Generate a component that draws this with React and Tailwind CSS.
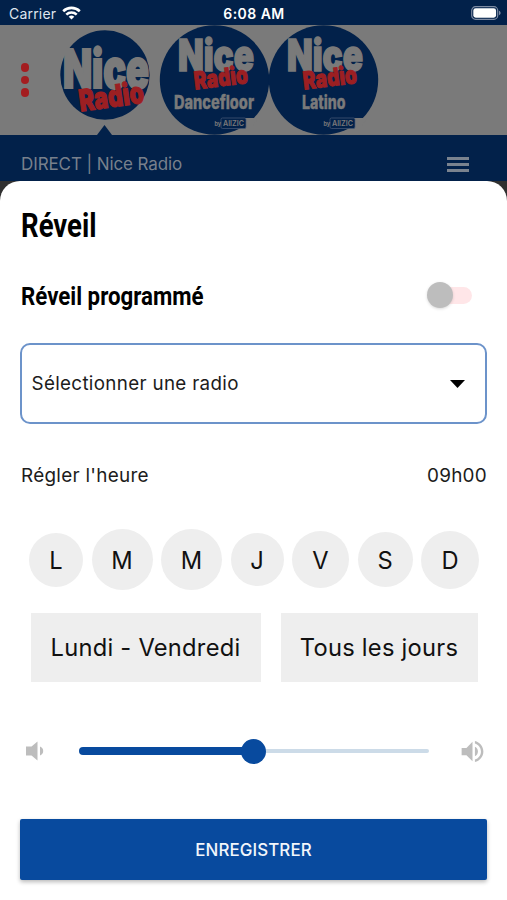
import React from "react"
import { MdVolumeUp } from "react-icons/md";

const days = [
  { label: "L", size: "size-[54px]" },
  { label: "M", size: "size-[61px]" },
  { label: "M", size: "size-[61px]" },
  { label: "J", size: "size-[53px]" },
  { label: "V", size: "size-[57px]" },
  { label: "S", size: "size-[55px]" },
  { label: "D", size: "size-[58px]" },
];

const StatusBar = () => (
  <div className="grid h-[25px] grid-cols-3 items-center bg-[#02214a] pt-[3px] pr-[6px] pl-[9px] text-white">
    <div className="flex items-center gap-[6px]">
      <span className="text-[14px] leading-none tracking-[0.2px] text-[#dfe5ee]">Carrier</span>
      <svg className="-mt-[2px]" width="19" height="14" viewBox="0 0 19 14" fill="none" stroke="#fff" strokeWidth="2.6">
        <path d="M1.2 5.2a12 12 0 0 1 16.6 0" />
        <path d="M4.3 8.6a7.6 7.6 0 0 1 10.4 0" />
        <path d="M9.5 13.6 6.7 10.8a4 4 0 0 1 5.6 0z" fill="#fff" stroke="none" />
      </svg>
    </div>
    <span className="-ml-[2px] text-center text-[14px] leading-none font-semibold tracking-[0.45px] whitespace-nowrap">6:08 AM</span>
    <svg className="-mt-[2px] justify-self-end" width="30" height="14" viewBox="0 0 30 14">
      <rect x="0.7" y="0.7" width="26" height="12.6" rx="3.8" fill="none" stroke="#7d8ba3" strokeWidth="1.2" />
      <rect x="2.3" y="2.3" width="22.8" height="9.4" rx="2.4" fill="#fff" />
      <path d="M28 4.8v4.4c1-.4 1.6-1.2 1.6-2.2S29 5.2 28 4.8z" fill="#7d8ba3" />
    </svg>
  </div>
)

const NiceLogo = () => (
  <svg className="overflow-visible" width="110" height="110" viewBox="0 0 110 110" fontFamily="Inter, sans-serif" fontWeight="900">
    <circle cx="55" cy="50" r="44.7" fill="#02214a" />
    <text x="13" y="63" fontSize="54" fill="#7a7a7a" stroke="#7a7a7a" strokeWidth="2.2" textLength="86" lengthAdjust="spacingAndGlyphs">Nice</text>
    <text transform="translate(30.5 86.5) rotate(-8)" fontSize="30" fill="#9c1f22" stroke="#9c1f22" strokeWidth="1.2" textLength="65" lengthAdjust="spacingAndGlyphs">Radio</text>
  </svg>
)

const ChannelLogo = ({ name, x, width }) => (
  <svg className="overflow-visible" width="109" height="110" viewBox="0 0 109 110" fontFamily="Inter, sans-serif" fontWeight="900">
    <circle cx="54.5" cy="55" r="54.7" fill="#02214a" />
    <text x="18" y="45.5" fontSize="44" fill="#7a7a7a" stroke="#7a7a7a" strokeWidth="1.6" textLength="76" lengthAdjust="spacingAndGlyphs">Nice</text>
    <text transform="translate(35 64.5) rotate(-7)" fontSize="24.5" fill="#9c1f22" stroke="#9c1f22" strokeWidth="1" textLength="54" lengthAdjust="spacingAndGlyphs">Radio</text>
    <text x={x} y="84" fontSize="19" fontWeight="800" fill="#7a7a7a" stroke="#7a7a7a" strokeWidth="0.4" textLength={width} lengthAdjust="spacingAndGlyphs">{name}</text>
    <path d="M84 93h14l-5 8h-9z" fill="#7a7a7a" />
    <rect x="61" y="93" width="25" height="10.5" rx="1.5" fill="#02214a" stroke="#4a5c78" strokeWidth="0.7" />
    <text x="54.5" y="101" fontSize="5.5" fontWeight="700" fill="#7a7a7a">by</text>
    <text x="63" y="101" fontSize="7.5" fontWeight="600" fill="#7a7a7a" textLength="21" lengthAdjust="spacingAndGlyphs">AllZIC</text>
  </svg>
)

const Header = () => (
  <div>
    <div className="relative flex h-[110px] items-start bg-[#7a7a7a]">
      <div className="flex w-[50px] flex-col items-center gap-1 self-center">
        <span className="size-[8.4px] rounded-full bg-[#a41d20]" />
        <span className="size-[8.4px] rounded-full bg-[#a41d20]" />
        <span className="size-[8.4px] rounded-full bg-[#a41d20]" />
      </div>
      <NiceLogo />
      <ChannelLogo name="Dancefloor" x="14" width="80" />
      <ChannelLogo name="Latino" x="33" width="43.5" />
      <svg className="absolute bottom-0 left-[97px]" width="15" height="10" viewBox="0 0 15 10">
        <path d="M7.5 0 15 10H0z" fill="#02214a" />
      </svg>
    </div>
    <div className="flex h-[46px] items-center justify-between bg-[#02214a] pt-3 pr-[38px] pl-[21px]">
      <span className="text-[17px] leading-none tracking-[-0.1px] text-[#78808c]">DIRECT | Nice Radio</span>
      <div className="flex w-[22px] flex-col gap-[3px]">
        <span className="h-[3px] bg-[#7a838f]" />
        <span className="h-[3px] bg-[#7a838f]" />
        <span className="h-[3px] bg-[#7a838f]" />
      </div>
    </div>
  </div>
)

const App = () => {
  return (
    <div className="flex h-[900px] w-[507px] flex-col overflow-hidden bg-[#303030] font-['Inter',sans-serif] text-[#1c1c1c]">
      <StatusBar />
      <Header />

      <div className="flex flex-1 flex-col rounded-t-[20px] bg-white px-5">
        <h1 className="mt-[24px] ml-px h-[40px] w-fit origin-left scale-x-[0.81] font-['Roboto',sans-serif] text-[34px] leading-[40px] font-bold text-black">
          Réveil
        </h1>

        <div className="mt-[35px] flex h-[32px] items-center justify-between">
          <h2 className="ml-px w-fit origin-left scale-x-[0.84] font-['Roboto',sans-serif] text-[26.5px] leading-8 font-bold whitespace-nowrap text-black">
            Réveil programmé
          </h2>
          <div className="mr-[15px] -mt-[2px] flex h-[17px] w-[45px] items-center">
            <span className="z-10 size-[26px] shrink-0 rounded-full bg-[#bdbdbd] shadow-[0_1px_3px_rgba(0,0,0,0.15)]" />
            <span className="-ml-[10px] h-[17px] w-[29px] shrink-0 rounded-r-full bg-[#ffe6e8]" />
          </div>
        </div>

        <div className="mt-[31px] flex h-[81px] items-center justify-between rounded-[10px] border-2 border-[#6c93ca] pr-[20px] pl-[9.5px]">
          <span className="mt-[2px] text-[18.8px] tracking-[0.33px]">Sélectionner une radio</span>
          <svg width="15" height="8" viewBox="0 0 15 8">
            <path d="M0 0h15L7.5 8z" fill="#000" />
          </svg>
        </div>

        <div className="mt-[38px] flex h-7 items-center justify-between pl-px text-[18.9px] tracking-[0.28px]">
          <span>Régler l'heure</span>
          <span>09h00</span>
        </div>

        <div className="mt-[39px] flex h-[61px] items-center justify-between pr-[8px] pl-[9px]">
          {days.map((day, i) => (
            <button key={i} className={`flex items-center justify-center rounded-full bg-[#eeeeee] pt-[2px] text-[23.7px] text-[#111] ${day.size}`}>
              {day.label}
            </button>
          ))}
        </div>

        <div className="mt-[23px] flex gap-5 pl-[10.5px] text-[23.7px] tracking-[0.25px] text-[#111]">
          <button className="h-[69px] w-[230px] bg-[#eeeeee] whitespace-nowrap">Lundi - Vendredi</button>
          <button className="h-[69px] w-[197px] bg-[#eeeeee] whitespace-nowrap">Tous les jours</button>
        </div>

        <div className="mt-[55px] flex h-[28px] items-center">
          <svg className="size-[28px]" viewBox="0 0 28 28" fill="#bdbdbd">
            <path d="M6 9.5h5.5L17.5 4.5v19l-6-5H6z" />
            <path d="M20 9.6c2 .6 3.2 2.3 3.2 4.4s-1.2 3.800-3.200 4.400z" />
          </svg>
          <div className="ml-[31px] flex w-[350px] items-center">
            <span className="h-[7.5px] w-[165px] rounded-l-full bg-[#084a9e]" />
            <span className="-ml-[3px] size-[25px] rounded-full bg-[#084a9e]" />
            <span className="h-[4.5px] flex-1 rounded-r-full bg-[#ccdbe8]" />
          </div>
          <MdVolumeUp className="ml-[29px] size-[29px] text-[#bdbdbd]" />
        </div>

        <button className="mt-[54px] h-[61px] rounded-[2px] bg-[#084a9e] pt-[2px] text-[16.9px] font-medium tracking-[0.1px] text-[#f2f6fb] shadow-[0_2px_4px_rgba(0,0,0,0.28)]">
          ENREGISTRER
        </button>
      </div>
    </div>
  )
}

export default App;
